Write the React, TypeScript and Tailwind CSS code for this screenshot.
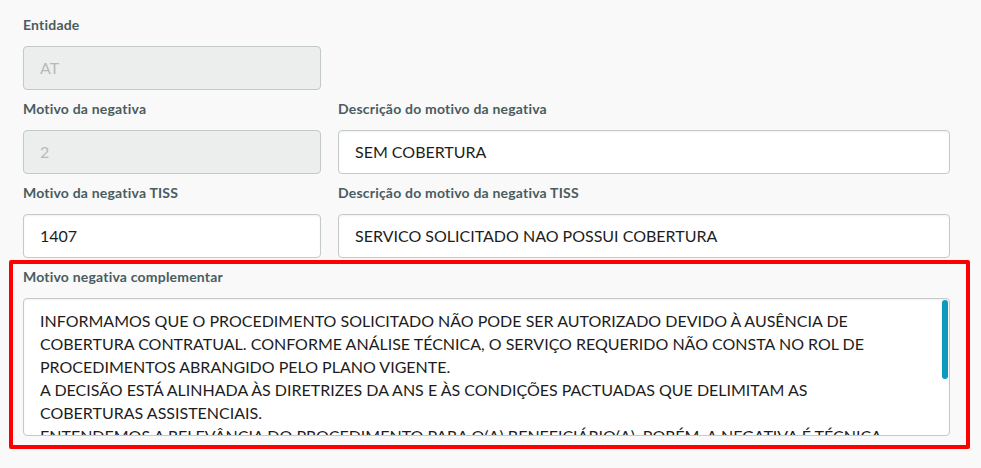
import React from 'react';

// Campo de texto simples (input somente leitura)
const Field = ({ label, value, disabled = false }: { label: string; value: string; disabled?: boolean }) => (
  <div className="flex flex-col">
    <label className="pt-[9px] pb-[11px] text-[14px] leading-[20px] font-bold tracking-[0.2px] text-[#4a5c60]">{label}</label>
    <div
      className={
        disabled
          ? 'h-[44px] flex items-center px-[16px] rounded-[4px] border border-[#c4c9c9] bg-[#eceeee] text-[16px] text-[#b5baba]'
          : 'h-[44px] flex items-center px-[16px] rounded-[4px] border border-[#c4c9c9] bg-white text-[16px] text-[#1d1d1d] shadow-[inset_0_1px_2px_rgba(0,0,0,0.06)]'
      }
    >
      {value}
    </div>
  </div>
);

const complementLines = [
  'INFORMAMOS QUE O PROCEDIMENTO SOLICITADO NÃO PODE SER AUTORIZADO DEVIDO À AUSÊNCIA DE',
  'COBERTURA CONTRATUAL. CONFORME ANÁLISE TÉCNICA, O SERVIÇO REQUERIDO NÃO CONSTA NO ROL DE',
  'PROCEDIMENTOS ABRANGIDO PELO PLANO VIGENTE.',
  'A DECISÃO ESTÁ ALINHADA ÀS DIRETRIZES DA ANS E ÀS CONDIÇÕES PACTUADAS QUE DELIMITAM AS',
  'COBERTURAS ASSISTENCIAIS.',
  'ENTENDEMOS A RELEVÂNCIA DO PROCEDIMENTO PARA O(A) BENEFICIÁRIO(A), PORÉM, A NEGATIVA É TÉCNICA',
];

export default function App() {
  return (
    <div className="w-[981px] h-[468px] overflow-hidden bg-[#f9f9f9] pl-[23px] pr-[31px] pt-[6px] font-['Lato','Noto_Sans',sans-serif]">
      <div className="grid grid-cols-[298px_1fr] gap-x-[17px]">
        <Field label="Entidade" value="AT" disabled />
        <div />
        <Field label="Motivo da negativa" value="2" disabled />
        <Field label="Descrição do motivo da negativa" value="SEM COBERTURA" />
        <Field label="Motivo da negativa TISS" value="1407" />
        <Field label="Descrição do motivo da negativa TISS" value="SERVICO SOLICITADO NAO POSSUI COBERTURA" />
      </div>

      {/* Campo complementar com destaque */}
      <div className="relative flex flex-col">
        <label className="pt-[9px] pb-[11px] text-[14px] leading-[20px] font-bold tracking-[0.2px] text-[#4a5c60]">
          Motivo negativa complementar
        </label>
        <div className="relative h-[138px] overflow-hidden rounded-[4px] border border-[#c4c9c9] bg-white pl-[16px] pr-[24px] pt-[10px] text-[16px] leading-[23px] text-[#1d1d1d] shadow-[inset_0_1px_2px_rgba(0,0,0,0.06)]">
          {complementLines.map((line, i) => (
            <div key={i} className="whitespace-nowrap">
              {line}
            </div>
          ))}
          <div className="absolute right-[1px] top-[1px] w-[6px] h-[79px] rounded-[3px] bg-[#0c9abe]" />
        </div>
        <div className="pointer-events-none absolute left-[-14px] right-[-20px] top-[2px] bottom-[-13px] rounded-[2px] border-[4px] border-[#ff0000]" />
      </div>
    </div>
  );
}
